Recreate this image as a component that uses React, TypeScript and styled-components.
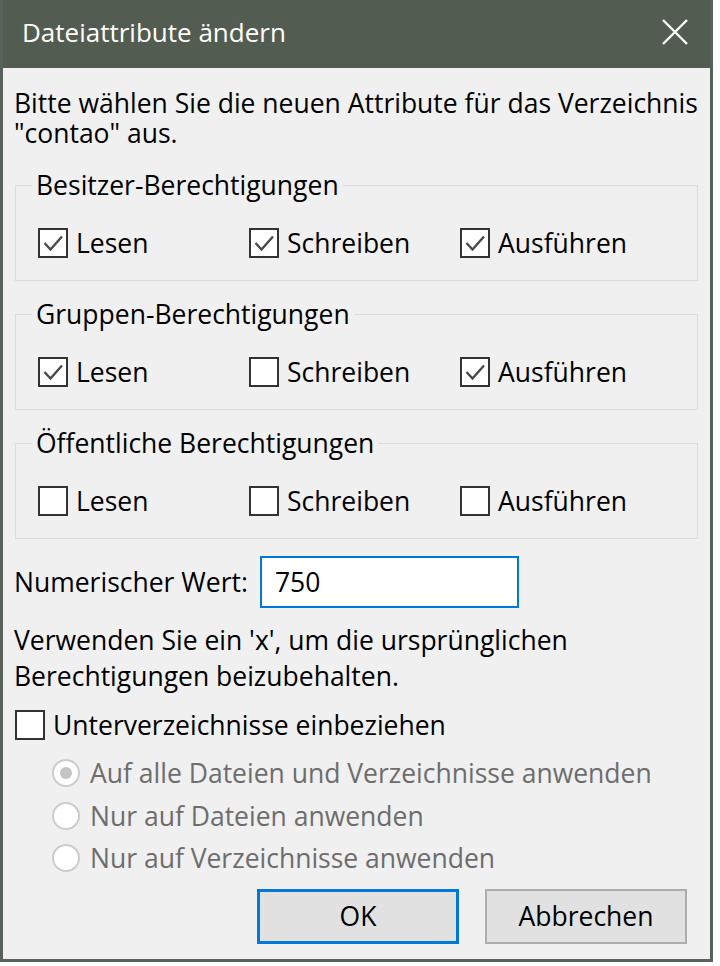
import styled, { createGlobalStyle } from "styled-components"

const GlobalStyle = createGlobalStyle`
    body {
        margin: 0;
        background: #ffffff;
        font-family: "Open Sans", "Noto Sans", sans-serif;
    }
`

interface Permission {
    label: string;
    checked: boolean;
}

interface Group {
    title: string;
    items: Permission[];
}

const groups: Group[] = [
    {
        title: "Besitzer-Berechtigungen",
        items: [
            { label: "Lesen", checked: true },
            { label: "Schreiben", checked: true },
            { label: "Ausführen", checked: true },
        ],
    },
    {
        title: "Gruppen-Berechtigungen",
        items: [
            { label: "Lesen", checked: true },
            { label: "Schreiben", checked: false },
            { label: "Ausführen", checked: true },
        ],
    },
    {
        title: "Öffentliche Berechtigungen",
        items: [
            { label: "Lesen", checked: false },
            { label: "Schreiben", checked: false },
            { label: "Ausführen", checked: false },
        ],
    },
]

const radios = [
    { label: "Auf alle Dateien und Verzeichnisse anwenden", selected: true },
    { label: "Nur auf Dateien anwenden", selected: false },
    { label: "Nur auf Verzeichnisse anwenden", selected: false },
]

const CheckBox = ({ checked }: { checked: boolean }) => (
    <Box>
        {checked ? (
            <svg width="26" height="26" viewBox="0 0 26 26">
                <polyline points="4.5,13 10.5,19.5 22,6.5" fill="none" stroke="#4a4a4a" strokeWidth="2.4" />
            </svg>
        ) : null}
    </Box>
)

const App = () => {
    return (
        <>
            <GlobalStyle />
            <Window>
                <TitleBar>
                    <Title>Dateiattribute ändern</Title>
                    <svg width="26" height="26" viewBox="0 0 26 26">
                        <path d="M1 1 L25 25 M25 1 L1 25" stroke="#ffffff" strokeWidth="2.4" />
                    </svg>
                </TitleBar>
                <Body>
                    <Intro>
                        Bitte wählen Sie die neuen Attribute für das Verzeichnis
                        <br />
                        "contao" aus.
                    </Intro>

                    {groups.map((group) => (
                        <GroupBox key={group.title}>
                            <Legend>{group.title}</Legend>
                            <CheckRow>
                                {group.items.map((item) => (
                                    <CheckItem key={item.label}>
                                        <CheckBox checked={item.checked} />
                                        <span>{item.label}</span>
                                    </CheckItem>
                                ))}
                            </CheckRow>
                        </GroupBox>
                    ))}

                    <NumericRow>
                        <span>Numerischer Wert:</span>
                        <ValueInput>750</ValueInput>
                    </NumericRow>

                    <Hint>
                        Verwenden Sie ein 'x', um die ursprünglichen
                        <br />
                        Berechtigungen beizubehalten.
                    </Hint>

                    <SubdirRow>
                        <CheckBox checked={false} />
                        <span>Unterverzeichnisse einbeziehen</span>
                    </SubdirRow>

                    <RadioList>
                        {radios.map((radio) => (
                            <RadioItem key={radio.label}>
                                <RadioCircle $selected={radio.selected} />
                                <span>{radio.label}</span>
                            </RadioItem>
                        ))}
                    </RadioList>

                    <ButtonRow>
                        <Button $default>OK</Button>
                        <Button>Abbrechen</Button>
                    </ButtonRow>
                </Body>
            </Window>
        </>
    )
}

export default App

const Window = styled.div`
    width: 713px;
    height: 962px;
    box-sizing: border-box;
    border: 3px solid #59625a;
    border-top: none;
    background: #f0f0f0;
    display: flex;
    flex-direction: column;
    color: #000000;
    font-size: 26.5px;
`

const TitleBar = styled.div`
    height: 68px;
    flex-shrink: 0;
    box-sizing: border-box;
    background: #535c51;
    display: flex;
    align-items: center;
    justify-content: space-between;
    padding: 0 22px 4px 19px;
    color: #ffffff;
`

const Title = styled.span`
    font-size: 26px;
    line-height: 30px;
`

const Body = styled.div`
    padding: 20px 11px 0 11px;
    display: flex;
    flex-direction: column;
`

const Intro = styled.p`
    margin: 0;
    line-height: 30px;
`

const GroupBox = styled.fieldset`
    margin: 18px 1px 0 1px;
    padding: 28px 0 22px 22px;
    border: 1px solid #dcdcdc;
    min-width: 0;

    &:first-of-type {
        margin-top: 22px;
    }
`

const Legend = styled.legend`
    margin-left: -6px;
    padding: 0 4px;
    line-height: 30px;
`

const CheckRow = styled.div`
    display: grid;
    grid-template-columns: 211px 211px auto;
`

const CheckItem = styled.div`
    display: flex;
    align-items: center;
    gap: 8px;
    height: 30px;
`

const Box = styled.div`
    width: 30px;
    height: 30px;
    box-sizing: border-box;
    border: 2px solid #333333;
    background: #ffffff;
    display: flex;
    align-items: center;
    justify-content: center;
    flex-shrink: 0;
`

const NumericRow = styled.div`
    margin-top: 17px;
    display: flex;
    align-items: center;
    gap: 12px;
`

const ValueInput = styled.div`
    width: 259px;
    height: 52px;
    flex-shrink: 0;
    box-sizing: border-box;
    border: 2px solid #0078d7;
    background: #ffffff;
    padding-left: 13px;
    display: flex;
    align-items: center;
`

const Hint = styled.p`
    margin: 14px 0 0 0;
    line-height: 36px;
`

const SubdirRow = styled.div`
    margin-top: 13px;
    display: flex;
    align-items: center;
    gap: 8px;
    margin-left: 1px;
`

const RadioList = styled.div`
    margin-top: 9px;
    padding-left: 38px;
    display: flex;
    flex-direction: column;
`

const RadioItem = styled.div`
    height: 42.5px;
    display: flex;
    align-items: center;
    gap: 10px;
    color: #6d6d6d;
`

const RadioCircle = styled.div<{ $selected: boolean }>`
    width: 28px;
    height: 28px;
    box-sizing: border-box;
    border-radius: 50%;
    border: 2px solid #cccccc;
    background: #ffffff;
    display: flex;
    align-items: center;
    justify-content: center;

    &::after {
        content: "";
        width: 12px;
        height: 12px;
        border-radius: 50%;
        background: ${(p) => (p.$selected ? "#c4c4c4" : "transparent")};
    }
`

const ButtonRow = styled.div`
    margin-top: 9px;
    margin-right: 12px;
    display: flex;
    justify-content: flex-end;
    gap: 26px;
`

const Button = styled.div<{ $default?: boolean }>`
    width: 202px;
    height: 55px;
    box-sizing: border-box;
    background: #e1e1e1;
    border: ${(p) => (p.$default ? "3px solid #0078d7" : "2px solid #adadad")};
    display: flex;
    align-items: center;
    justify-content: center;
`
